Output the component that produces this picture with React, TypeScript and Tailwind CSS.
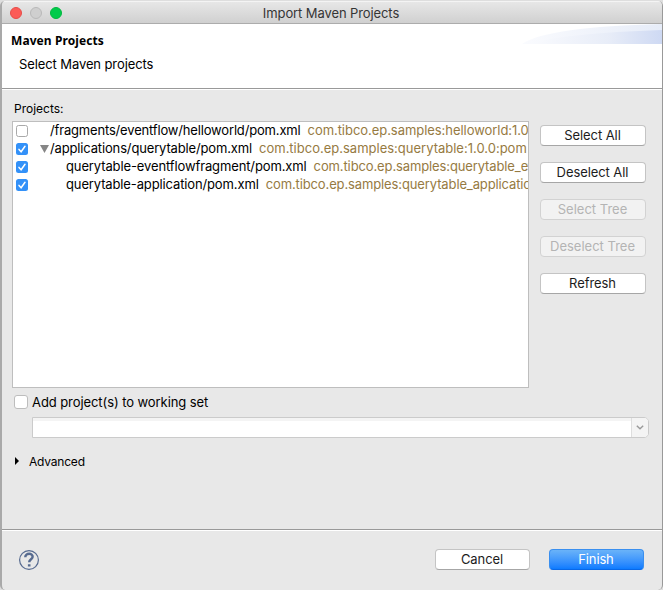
import type { ReactNode } from "react";
import clsx from "clsx";

function Check({ checked }: { checked?: boolean }) {
  return (
    <span
      className={clsx(
        "flex size-3 shrink-0 items-center justify-center rounded-[2.5px]",
        checked ? "bg-[#3391f8]" : "border border-[#a9a9a9] bg-white",
      )}
    >
      {checked && (
        <svg width="12" height="12" viewBox="0 0 12 12" fill="none">
          <path d="M3 6.4 L5.1 8.7 L9 3.3" stroke="#fff" strokeWidth="1.5" strokeLinecap="round" />
        </svg>
      )}
    </span>
  );
}

type RowProps = { checked?: boolean; open?: boolean; child?: boolean; path: string; coords: string; spacing: string; coordSpacing: string };

function Row({ checked, open, child, path, coords, spacing, coordSpacing }: RowProps) {
  return (
    <div className="flex h-[18px] items-center pl-[3px] whitespace-pre">
      <Check checked={checked} />
      <span className={clsx("flex shrink-0 justify-end", child ? "w-[38px]" : "w-[22px]")}>
        {open && (
          <svg width="10" height="8" viewBox="0 0 10 8">
            <path d="M0 0H9L4.5 8Z" fill="#868686" />
          </svg>
        )}
      </span>
      <span className={clsx("shrink-0 pb-0.5 text-black", spacing)}>{path}</span>
      <span className={clsx("ml-[7px] shrink-0 pb-0.5 text-[#967a42]", coordSpacing)}>{coords}</span>
    </div>
  );
}

function Button({ children, disabled, primary }: { children: ReactNode; disabled?: boolean; primary?: boolean }) {
  return (
    <button
      className={clsx(
        "flex h-[21px] w-full items-center justify-center rounded-[4px] border pr-px pb-0.5",
        disabled && "border-[#d2d2d2] bg-[#f2f2f2] text-[#b4b4b4]",
        primary && "border-[#3a8fef] border-b-[#0868e8] bg-linear-to-b from-[#6ab3f8] to-[#0a7bff] tracking-[-0.15px] text-white",
        !disabled && !primary && "border-[#c4c4c4] border-b-[#a6a6a6] bg-white tracking-[-0.08px] text-[#1c1c1c]",
      )}
    >
      {children}
    </button>
  );
}

export default function App() {
  return (
    <div className="h-[590px] w-[663px] overflow-hidden bg-[#dedede] pt-px font-['Inter','Liberation_Sans',sans-serif] text-[13px] leading-[18px] text-black">
      <div className="flex h-[589px] flex-col overflow-hidden rounded-[5px] border-r border-l-2 border-r-[#999] border-l-[#a9a9a9] bg-[#e8e8e8]">
        <header className="relative flex h-[23px] shrink-0 items-center border-t border-b border-t-[#f4f4f4] border-b-[#acacac] bg-linear-to-b from-[#e7e7e7] to-[#d0d0d0] pl-2">
          <div className="flex gap-2">
            <span className="size-3 rounded-full border border-[#e64c48] bg-[#fc5b57]" />
            <span className="size-3 rounded-full border border-[#b9b9b9] bg-[#cfcfcf]" />
            <span className="size-3 rounded-full border border-[#00b83e] bg-[#00cb4b]" />
          </div>
          <h1 className="absolute inset-x-0 pr-0.5 text-center tracking-[-0.1px] text-[#353535]">Import Maven Projects</h1>
        </header>

        <section className="relative flex h-[66px] shrink-0 flex-col border-b border-b-white bg-white pt-[8px] pl-[9px] shadow-[inset_0_-1px_0_#999]">
          <svg className="absolute top-0 right-0" width="140" height="20" viewBox="0 0 140 20">
            <defs>
              <linearGradient id="far">
                <stop stopColor="#fafbfe" />
                <stop offset="1" stopColor="#e6ecf8" />
              </linearGradient>
              <linearGradient id="near">
                <stop stopColor="#fafbfe" />
                <stop offset=".6" stopColor="#e8edf8" />
                <stop offset="1" stopColor="#ced9f3" />
              </linearGradient>
            </defs>
            <path d="M0 20C18 8 65 2 140 0V20Z" fill="url(#far)" />
            <path d="M5 20C30 13 75 8 140 6V20Z" fill="url(#near)" />
          </svg>
          <h2 className="font-['Noto_Sans'] text-[12px] font-bold tracking-[0.08px]">Maven Projects</h2>
          <p className="mt-[5px] pl-2 tracking-[-0.1px]">Select Maven projects</p>
        </section>

        <main className="flex h-[439px] shrink-0 flex-col pt-[10px] pr-[14px] pl-[10px]">
          <div className="flex h-[21px] items-start pl-0.5 text-[12px] leading-[18px]">Projects:</div>
          <div className="flex gap-[11px]">
            <div className="h-[267px] w-[517px] shrink-0 overflow-hidden border border-[#bebebe] bg-white">
              <Row path="/fragments/eventflow/helloworld/pom.xml" coords="com.tibco.ep.samples:helloworld:1.0" spacing="tracking-[-0.17px]" coordSpacing="tracking-[-0.05px]" />
              <Row checked open path="/applications/querytable/pom.xml" coords="com.tibco.ep.samples:querytable:1.0.0:pom" spacing="tracking-[-0.15px]" coordSpacing="tracking-[0px]" />
              <Row checked child path="querytable-eventflowfragment/pom.xml" coords="com.tibco.ep.samples:querytable_ev" spacing="tracking-[-0.12px]" coordSpacing="tracking-[-0.12px]" />
              <Row checked child path="querytable-application/pom.xml" coords="com.tibco.ep.samples:querytable_applicatio" spacing="tracking-[-0.13px]" coordSpacing="tracking-[-0.12px]" />
            </div>
            <div className="flex w-[106px] shrink-0 flex-col gap-4 pt-1">
              <Button>Select All</Button>
              <Button>Deselect All</Button>
              <Button disabled>Select Tree</Button>
              <Button disabled>Deselect Tree</Button>
              <Button>Refresh</Button>
            </div>
          </div>
          <label className="mt-[5px] flex h-[18px] items-center gap-[4px] pl-[2px]">
            <span className="size-[14px] rounded-[3px] border border-[#bdbdbd] bg-white" />
            <span className="tracking-[-0.08px]">Add project(s) to working set</span>
          </label>
          <div className="mt-[6px] ml-5 flex h-[21px] w-[617px] overflow-hidden rounded-r-[5px] border border-[#cbcbcb] bg-white">
            <span className="grow border-t-[3px] border-[#f4f4f4]" />
            <span className="flex w-[17px] items-center justify-center border-l border-[#dedede] bg-[#f4f4f4]">
              <svg width="8" height="5" viewBox="0 0 8 5" fill="none">
                <path d="M.8 .8L4 3.8L7.2 .8" stroke="#9a9a9a" strokeWidth="1.4" />
              </svg>
            </span>
          </div>
          <div className="mt-[14px] flex h-[18px] items-center gap-[10px] pl-[3px]">
            <svg width="4" height="8" viewBox="0 0 4 8">
              <path d="M0 0L4 4L0 8Z" fill="#000" />
            </svg>
            <span className="pt-0.5 text-[12px] tracking-[-0.2px]">Advanced</span>
          </div>
        </main>

        <footer className="flex grow items-start border-t border-[#999] pr-[18px] pl-4 shadow-[inset_0_1px_0_white]">
          <svg className="mt-[19px]" width="22" height="22" viewBox="0 0 22 22" fill="none" stroke="#576b90">
            <circle cx="11" cy="11" r="9.4" strokeWidth="1.2" />
            <path d="M7.3 8.2C7.3 3.6 15 3.8 14.6 8C14.4 10.2 11.2 10.3 11.2 13.2" strokeWidth="2.5" />
            <path d="M11.2 15.2V17.5" strokeWidth="2.6" />
          </svg>
          <div className="mt-[19px] ml-auto flex gap-[19px]">
            <div className="w-[95px]"><Button>Cancel</Button></div>
            <div className="w-[95px]"><Button primary>Finish</Button></div>
          </div>
        </footer>
      </div>
    </div>
  );
}
